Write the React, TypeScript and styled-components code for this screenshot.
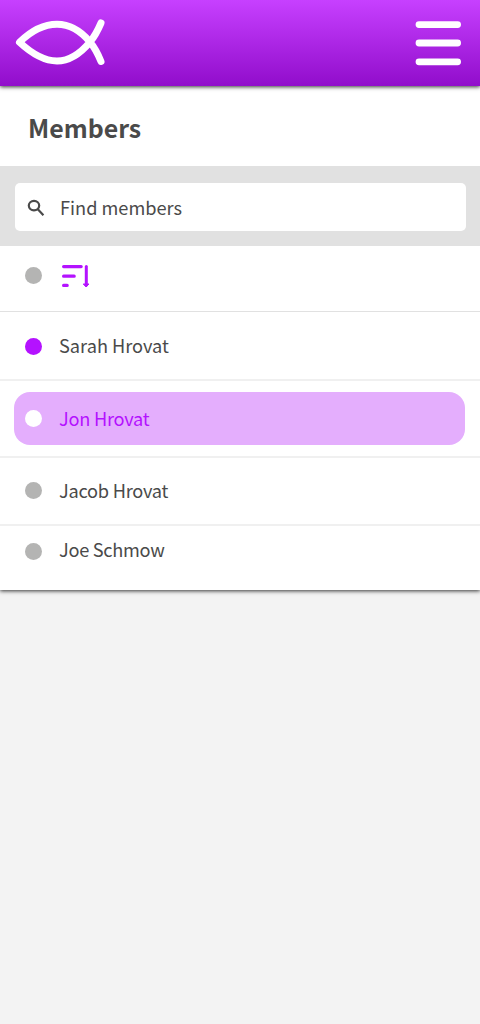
import React from 'react';
import styled, { createGlobalStyle } from 'styled-components';

const Global = createGlobalStyle`
  * { box-sizing: border-box; }
  body { margin: 0; background: #f3f3f3; color: #4a4a4a; font-family: "Noto Sans CJK SC", "Open Sans", sans-serif; }
`;
const Page = styled.div`min-height: 1024px; display: flex; flex-direction: column;`;
const Header = styled.header`
  height: 86px; display: flex; justify-content: space-between; align-items: flex-start;
  background: linear-gradient(#c740ff, #910dcb);
  box-shadow: 0 1px 4px rgba(0,0,0,.8); position: relative; z-index: 1;
`;
const Panel = styled.main`background: #fff; height: 504px; box-shadow: 0 1px 4px rgba(0,0,0,.8);`;
const TitleBar = styled.div`height: 80px; padding: 2px 28px 0; display: flex; align-items: center;`;
const Title = styled.h1`margin: 0; font-size: 24.9px; line-height: 32px; font-weight: 700;`;
const SearchBar = styled.div`height: 80px; background: #e1e1e1; padding: 17px 14px 15px 15px;`;
const SearchBox = styled.label`
  height: 48px; background: #fff; border-radius: 5px; display: flex; align-items: center;
  padding: 2px 0 0 12px; gap: 15px; font-size: 18.2px; line-height: 26px;
`;
const SearchText = styled.span`padding-bottom: 2px;`;
const Row = styled.div<{ $h: number; $line?: string; $top?: number; $bottom?: number }>`
  height: ${p => p.$h}px; display: flex; align-items: center;
  padding: ${p => p.$top ?? 0}px 15px ${p => p.$bottom ?? 0}px 14px;
  border-bottom: ${p => p.$line ?? '2px solid #f0f0f0'};
`;
const Item = styled.div<{ $selected?: boolean }>`
  flex: 1; height: 53px; border-radius: 16px; padding-left: 11px; display: flex; align-items: center; gap: 17px;
  font-size: 18.2px; background: ${p => p.$selected ? '#e4aefd' : 'transparent'};
  color: ${p => p.$selected ? '#b412ff' : '#4a4a4a'};
`;
const Name = styled.span<{ $lift?: number; $track?: number }>`
  line-height: 26px; padding-bottom: ${p => p.$lift ?? 2}px; letter-spacing: ${p => p.$track ?? 0}px;
`;
const Dot = styled.span<{ $color: string }>`width: 17px; height: 17px; border-radius: 50%; background: ${p => p.$color};`;

export default function App() {
  return (
    <Page>
      <Global />
      <Header>
        <svg width="120" height="86" fill="none" stroke="#fff" strokeWidth="7" strokeLinecap="round" strokeLinejoin="round">
          <path d="M101 23C98 30 95 36 90 42C80 54 69 61 57 61C43 61 31 53 19.5 42.3C31 31 43 24.3 57 24.3C69 24.3 80 30 90 42C95 48 98 54 101 61.5" />
        </svg>
        <svg width="80" height="86" fill="none" stroke="#fff" strokeWidth="6.8" strokeLinecap="round"><path d="M19 24.6H57.6M19 43H57.6M19 61.8H57.6" /></svg>
      </Header>
      <Panel>
        <TitleBar><Title>Members</Title></TitleBar>
        <SearchBar>
          <SearchBox>
            <svg width="18" height="18" fill="none" stroke="#4a4a4a" strokeWidth="2.2"><ellipse cx="7" cy="6.6" rx="5.2" ry="4.7" /><path d="M10.6 10L16.4 16.2" /></svg>
            <SearchText>Find members</SearchText>
          </SearchBox>
        </SearchBar>
        <Row $h={66} $line="1px solid #e1e1e1" $bottom={6}><Item><Dot $color="#b4b4b3" />
          <svg width="34" height="28" fill="none" stroke="#b412ff" strokeWidth="3.2" strokeLinecap="round">
            <path d="M4.6 4.6H22.2M4.6 14.2H15.2M4.6 23.4H8.2" />
            <path d="M27.3 4.5V23" strokeWidth="3" />
            <path d="M24.6 22H30L27.3 24.7Z" fill="#b412ff" strokeWidth="1" strokeLinejoin="round" />
          </svg>
        </Item></Row>
        <Row $h={69} $top={2}><Item><Dot $color="#b412ff" /><Name $lift={3}>Sarah Hrovat</Name></Item></Row>
        <Row $h={77}><Item $selected><Dot $color="#fff" /><Name $track={-0.25}>Jon Hrovat</Name></Item></Row>
        <Row $h={68} $bottom={1}><Item><Dot $color="#b4b4b3" /><Name $track={-0.25}>Jacob Hrovat</Name></Item></Row>
        <Row $h={64} $line="0" $bottom={13}><Item><Dot $color="#b4b4b3" /><Name $lift={5} $track={-0.3}>Joe Schmow</Name></Item></Row>
      </Panel>
    </Page>
  );
}
